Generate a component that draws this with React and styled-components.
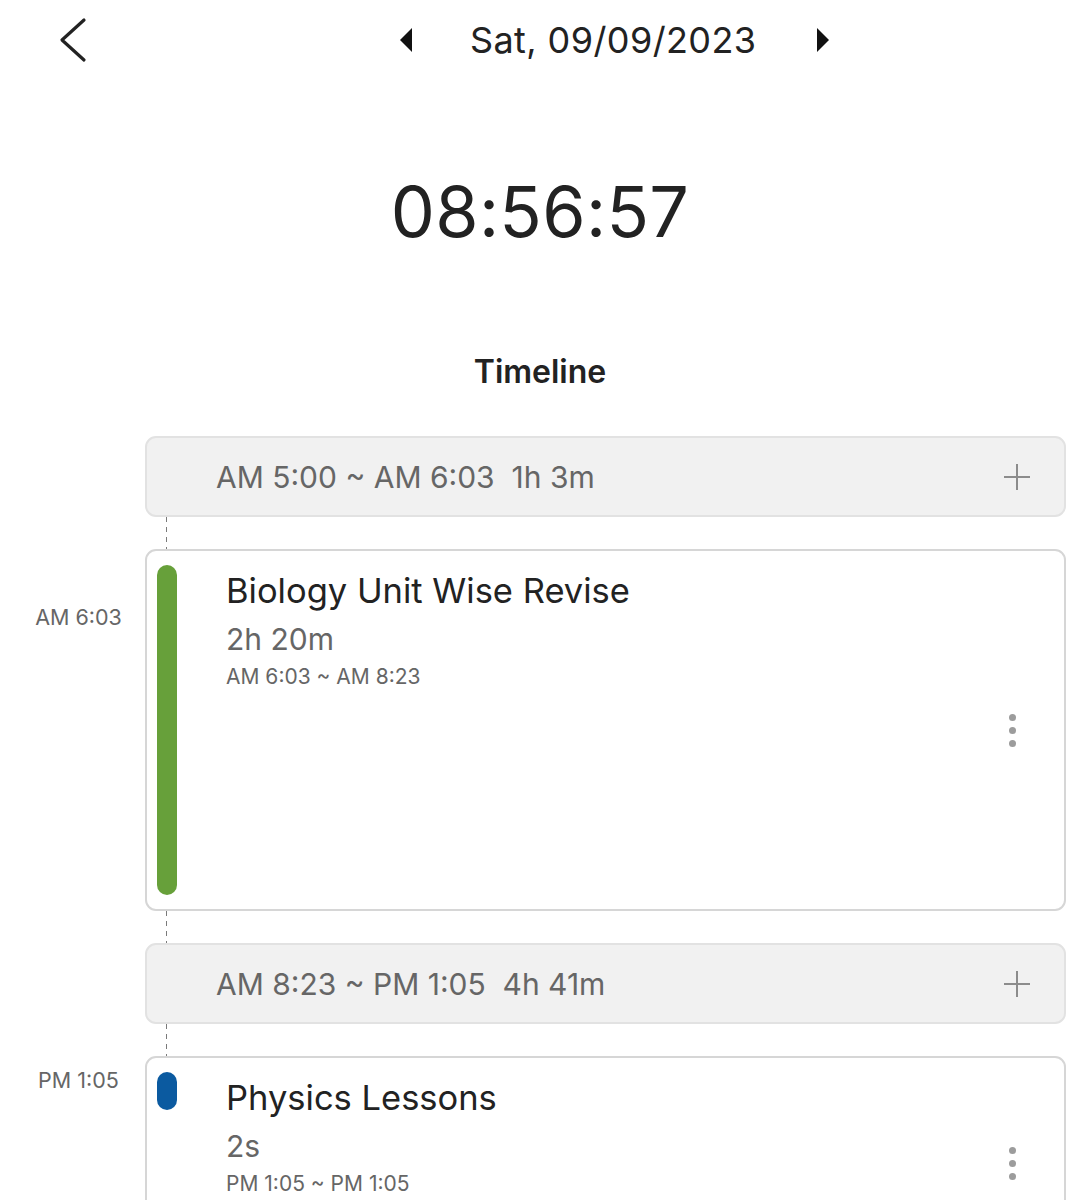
import React from "react";
import styled, { createGlobalStyle } from "styled-components";

const Global = createGlobalStyle`
  html, body { margin: 0; padding: 0; background: #ffffff; }
  body { font-family: Inter, "Noto Sans", "Liberation Sans", sans-serif; color: #222; }
  * { box-sizing: border-box; }
`;

const Page = styled.div`
  width: 1080px;
  height: 1200px;
  overflow: hidden;
  background: #fff;
`;

const Header = styled.header`
  display: flex;
  align-items: center;
  height: 80px;
  padding-left: 58px;
`;

const BackButton = styled.button`
  border: 0;
  background: none;
  padding: 0;
  width: 30px;
  height: 46px;
  display: flex;
  align-items: center;
  justify-content: center;
  cursor: pointer;
`;

const DateNav = styled.div`
  display: flex;
  align-items: center;
  margin-left: 311px;
`;

const ArrowButton = styled.button`
  border: 0;
  background: none;
  padding: 0;
  width: 14px;
  height: 26px;
  display: flex;
  align-items: center;
  justify-content: center;
`;

const DateText = styled.div`
  font-size: 36px;
  font-weight: 400;
  color: #222;
  margin: 0 ${(p) => p.$gapRight}px 0 ${(p) => p.$gapLeft}px;
  letter-spacing: 0.4px;
`;

const Clock = styled.div`
  text-align: center;
  font-size: 70px;
  font-weight: 400;
  color: #222;
  line-height: 90px;
  margin-top: 87px;
  letter-spacing: 0.3px;
`;

const SectionTitle = styled.h2`
  margin: 96px 0 0;
  text-align: center;
  font-size: 32px;
  font-weight: 600;
  line-height: 38px;
  color: #222;
`;

const Timeline = styled.div`
  margin-top: 45px;
  display: flex;
  flex-direction: column;
  padding-right: 14px;
`;

const Row = styled.div`
  display: grid;
  grid-template-columns: 145px 1fr;
`;

const SideLabel = styled.div`
  font-size: 21.5px;
  line-height: 25px;
  color: #666;
  text-align: center;
  padding-top: ${(p) => p.$top}px;
  padding-left: 12px;
`;

const Connector = styled.div`
  grid-column: 2;
  height: 32px;
  margin-left: 21px;
  width: 1px;
  background: repeating-linear-gradient(
    to bottom,
    #7a7a7a 0 5px,
    transparent 5px 10px
  );
`;

const GapCard = styled.div`
  grid-column: 2;
  height: 81px;
  background: #f1f1f1;
  border: 2px solid #e2e2e2;
  border-radius: 11px;
  display: flex;
  align-items: center;
  justify-content: space-between;
  padding: 0 34px 0 69px;
`;

const GapText = styled.span`
  font-size: 30px;
  color: #666;
  white-space: pre;
`;

const AddButton = styled.button`
  border: 0;
  background: none;
  padding: 0;
  width: 26px;
  height: 26px;
  display: flex;
  align-items: center;
  justify-content: center;
`;

const EventCard = styled.div`
  grid-column: 2;
  min-height: ${(p) => p.$height}px;
  background: #fff;
  border: 2px solid #d6d6d6;
  border-radius: 11px;
  display: flex;
  align-items: stretch;
  padding: 14px 0 14px 10px;
`;

const ColorBar = styled.div`
  width: 20px;
  flex-shrink: 0;
  border-radius: 10px;
  background: ${(p) => p.$color};
  height: ${(p) => (p.$full ? "auto" : `${p.$h}px`)};
  align-self: ${(p) => (p.$full ? "stretch" : "flex-start")};
`;

const EventBody = styled.div`
  flex: 1;
  padding: 5px 0 0 49px;
  display: flex;
  flex-direction: column;
`;

const EventTitle = styled.div`
  font-size: 34.5px;
  line-height: 42px;
  color: #222;
`;

const EventDuration = styled.div`
  font-size: 30px;
  line-height: 38px;
  color: #666;
  margin-top: 8px;
`;

const EventRange = styled.div`
  font-size: 21px;
  line-height: 26px;
  color: #666;
  margin-top: 6px;
`;

const Kebab = styled.button`
  border: 0;
  background: none;
  padding: 0;
  align-self: center;
  margin-right: 45px;
  display: flex;
  flex-direction: column;
  gap: 6px;
  width: 14px;
  align-items: center;
`;

const Dot = styled.span`
  width: 7px;
  height: 7px;
  border-radius: 50%;
  background: #9c9c9c;
`;

const ChevronLeft = () => (
  <svg width="30" height="46" viewBox="0 0 30 46">
    <polyline points="26,3 4,23 26,43" fill="none" stroke="#222" strokeWidth="3.2" strokeLinecap="round" strokeLinejoin="round" />
  </svg>
);

const Triangle = ({ dir }) => (
  <svg width="14" height="26" viewBox="0 0 14 26">
    {dir === "left" ? <polygon points="13,1 1,13 13,25" fill="#111" /> : <polygon points="1,1 13,13 1,25" fill="#111" />}
  </svg>
);

const Plus = () => (
  <svg width="26" height="26" viewBox="0 0 26 26">
    <path d="M13 0 V26 M0 13 H26" stroke="#8c8c8c" strokeWidth="2" />
  </svg>
);

const items = [
  { type: "gap", text: "AM 5:00 ~ AM 6:03  1h 3m" },
  {
    type: "event",
    label: "AM 6:03",
    labelTop: 56,
    title: "Biology Unit Wise Revise",
    duration: "2h 20m",
    range: "AM 6:03 ~ AM 8:23",
    color: "#67a03a",
    full: true,
    height: 362,
  },
  { type: "gap", text: "AM 8:23 ~ PM 1:05  4h 41m" },
  {
    type: "event",
    label: "PM 1:05",
    labelTop: 12,
    title: "Physics Lessons",
    duration: "2s",
    range: "PM 1:05 ~ PM 1:05",
    color: "#0b5aa0",
    full: false,
    height: 214,
  },
];

export default function App() {
  return (
    <Page>
      <Global />
      <Header>
        <BackButton aria-label="Back">
          <ChevronLeft />
        </BackButton>
        <DateNav>
          <ArrowButton aria-label="Previous day">
            <Triangle dir="left" />
          </ArrowButton>
          <DateText $gapLeft={57} $gapRight={60}>Sat, 09/09/2023</DateText>
          <ArrowButton aria-label="Next day">
            <Triangle dir="right" />
          </ArrowButton>
        </DateNav>
      </Header>
      <Clock>08:56:57</Clock>
      <SectionTitle>Timeline</SectionTitle>
      <Timeline>
        {items.map((it, i) => (
          <React.Fragment key={i}>
            {i > 0 && (
              <Row>
                <Connector />
              </Row>
            )}
            {it.type === "gap" ? (
              <Row>
                <div />
                <GapCard>
                  <GapText>{it.text}</GapText>
                  <AddButton aria-label="Add">
                    <Plus />
                  </AddButton>
                </GapCard>
              </Row>
            ) : (
              <Row>
                <SideLabel $top={it.labelTop}>{it.label}</SideLabel>
                <EventCard $height={it.height}>
                  <ColorBar $color={it.color} $full={it.full} $h={38} />
                  <EventBody>
                    <EventTitle>{it.title}</EventTitle>
                    <EventDuration>{it.duration}</EventDuration>
                    <EventRange>{it.range}</EventRange>
                  </EventBody>
                  <Kebab aria-label="More">
                    <Dot />
                    <Dot />
                    <Dot />
                  </Kebab>
                </EventCard>
              </Row>
            )}
          </React.Fragment>
        ))}
      </Timeline>
    </Page>
  );
}
